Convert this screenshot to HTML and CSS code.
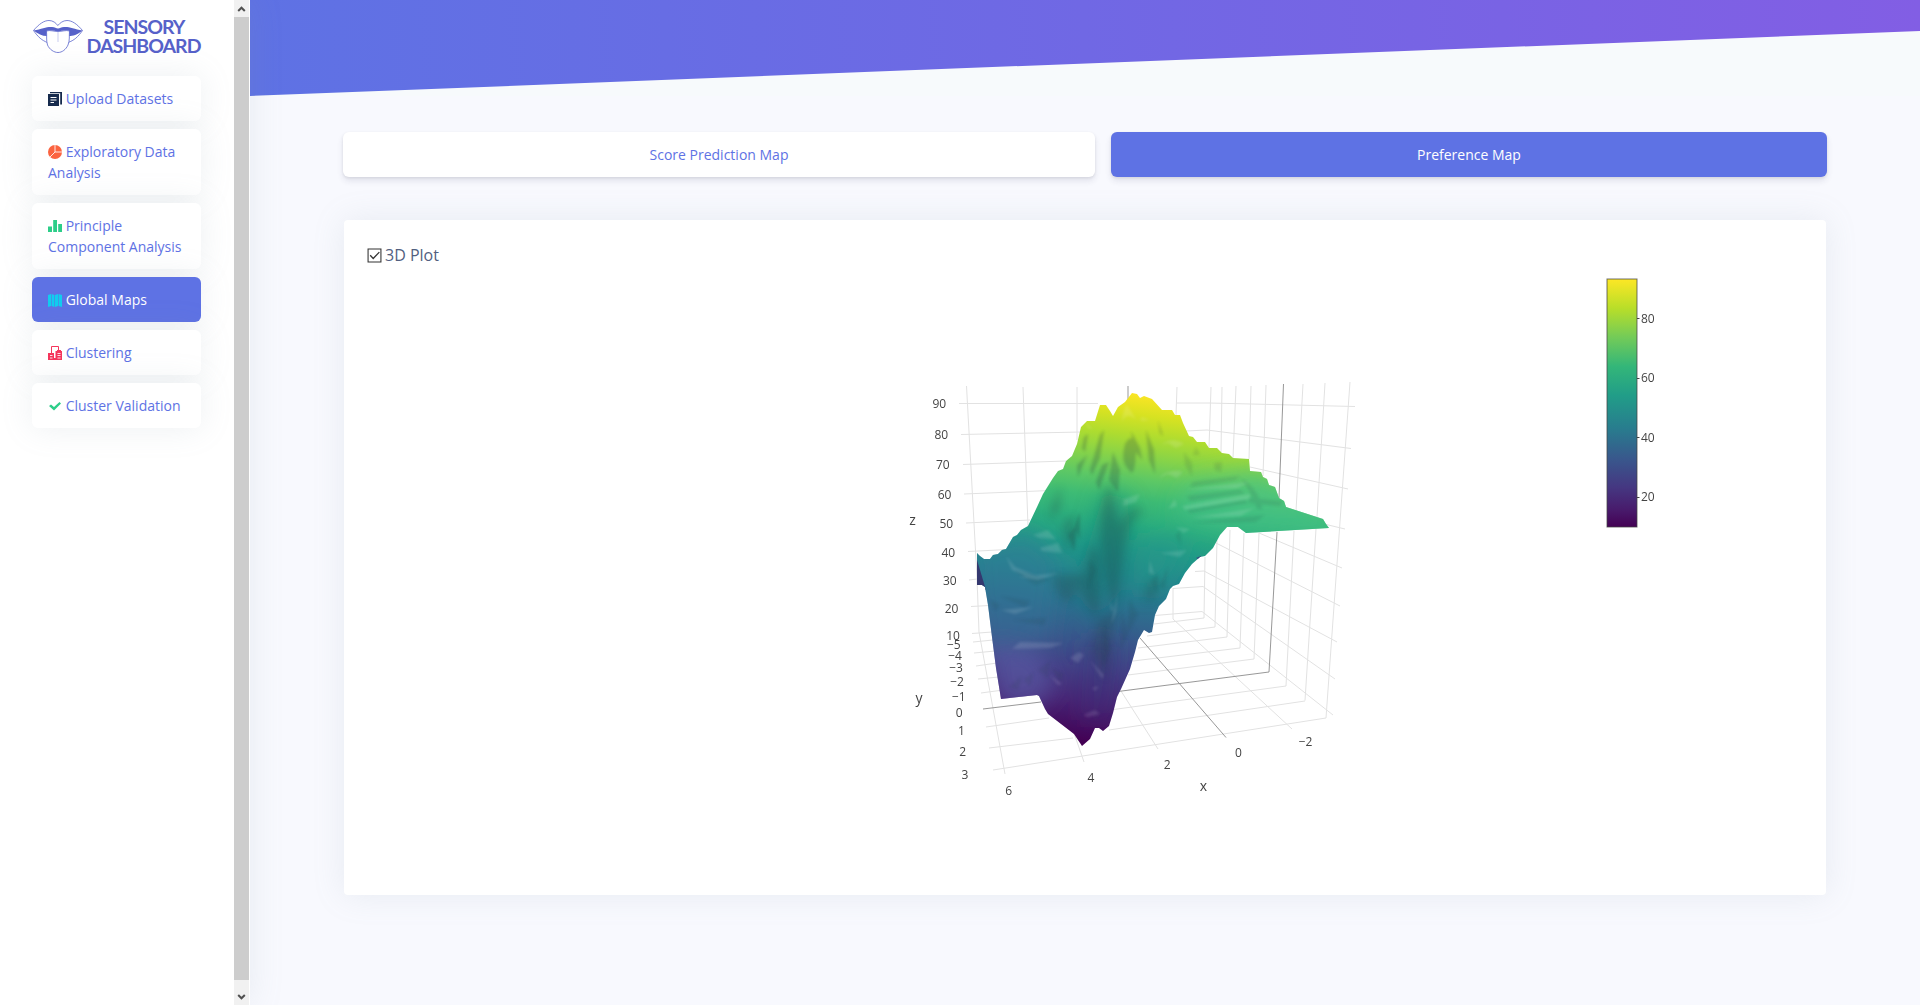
FILE: index.html
```html
<!DOCTYPE html>
<html lang="en">
<head>
<meta charset="utf-8">
<title>Sensory Dashboard</title>
<link rel="stylesheet" href="styles.css">
</head>
<body>
<div class="app">
  <aside class="sidebar">
    <div class="side-content">
      <svg class="logo" viewBox="32 16 176 41" role="img" aria-label="Sensory Dashboard">
        <g fill="none" stroke="#5a66cc" stroke-width=".8">
          <path d="M33.500 30.500C39 24 44 20.500 49 20.500C53 20.500 56 23 57.800 25.500C60 23 63 20.500 67 20.500C72 20.500 77 24 82.500 30.500"/>
          <path d="M33.500 30.500C38 37 42 40.500 47.500 42.500M82.500 30.500C78 37 74 40.500 68 42.500"/>
        </g>
        <path fill="#5661c9" d="M33.500 30.500C42 29 47 26.500 52 27C55 27.300 56 28.500 58 28.500S61 27.300 64 27C69 26.500 74 29 82.500 30.500C77 35 73 36 69 36V31C66 30 62 30.500 58 31.500C54 30.500 50 30 47 31V36C42 36 38 34 33.500 30.500Z"/>
        <path fill="#fff" stroke="#5a66cc" stroke-width=".8" d="M46.500 31C50 29.800 54 31.500 58 31.500S66 29.800 69.500 31C69 36 70 40 68 45C66 49.500 62 52.500 58 52.500S49.500 49.500 47.500 45C46 40 47 36 46.500 31Z"/>
        <path stroke="#c9cdf0" stroke-width="1" d="M58 32V42"/>
        <text x="103.500" y="34" textLength="82" lengthAdjust="spacing">SENSORY</text>
        <text x="86.500" y="52.500" textLength="115" lengthAdjust="spacing">DASHBOARD</text>
      </svg>
      <nav class="menu">
        <a class="item"><svg class="ico" viewBox="0 0 14 14"><path fill="#172b4d" d="M0 2h11v12H0zM2 0h12v12.500h-1.800V1.200H2z"/><path stroke="#fff" d="M2.500 5.500h6M2.500 8h6M2.500 10.500h3.500"/></svg> Upload Datasets</a>
        <a class="item"><svg class="ico" viewBox="0 0 14 14"><circle cx="7" cy="7" r="7" fill="#fb6340"/><path d="M7 0V7H14M7 7L2 12" fill="none" stroke="#fff" stroke-opacity=".85"/></svg> Exploratory Data Analysis</a>
        <a class="item"><svg class="ico" viewBox="0 0 14 14"><path fill="#2dce89" d="M0 7.500h4V13H0zM5.200 1h3.800v12H5.200zM10.200 5H14v8h-3.800z"/></svg> Principle Component Analysis</a>
        <a class="item active"><svg class="ico" viewBox="0 0 14 14"><path fill="#11cdef" d="M0 2l3-1v12l-3 1zM3.600 1l2.800 1v12l-2.800-1zM7 2l3-1v12l-3 1zM10.600 1L14 2v12l-3.400-1z"/></svg> Global Maps</a>
        <a class="item"><svg class="ico" viewBox="0 0 14 14"><path fill="#f5365c" d="M0 7h6v7H0zM7.500 5H9V4h4v1h1v9H7.500zM6 12h2v2H6z"/><path fill="none" stroke="#f5365c" d="M3.500 7V.5h7V5"/><path stroke="#fff" stroke-opacity=".85" d="M2 9.500h2.500M2 12h2.500M9.500 7.500h3M9.500 9.500h3M9.500 12h3"/></svg> Clustering</a>
        <a class="item"><svg class="ico" viewBox="0 0 14 14"><path fill="#2dce89" d="M1 7l2-1.600 3 2.500L11.500 3 13 4.400 6 11.500z"/></svg> Cluster Validation</a>
      </nav>
    </div>
    <div class="scrollbar">
      <span class="arrow"><svg viewBox="0 0 15 17"><path d="M4.200 11l3.300-3.300 3.300 3.300"/></svg></span>
      <span class="thumb"></span>
      <span class="arrow"><svg viewBox="0 0 15 17"><path d="M4.200 7l3.300 3.300L10.800 7"/></svg></span>
    </div>
  </aside>
  <main class="main">
    <div class="hero"><div class="slope"></div></div>
    <div class="tabs">
      <a class="tab">Score Prediction Map</a>
      <a class="tab selected">Preference Map</a>
    </div>
    <section class="card">
      <h2 class="title"><svg class="check" viewBox="0 0 14 14"><path d="M1 1h12v12H1z" stroke-width="1"/><path d="M3 6.800l2.800 3L11.500 3.800" stroke-width="1.200"/></svg>3D Plot</h2>
      <svg class="plot" viewBox="344 270 1482 600">
        <defs>
          <linearGradient id="surface" gradientUnits="userSpaceOnUse" x1="1130" y1="393" x2="1088" y2="743">
            <stop offset="0" stop-color="#fbe524"/><stop offset=".06" stop-color="#d6e222"/><stop offset=".12" stop-color="#addc30"/>
            <stop offset=".18" stop-color="#86d349"/><stop offset=".24" stop-color="#5dc865"/><stop offset=".3" stop-color="#3dbb75"/>
            <stop offset=".37" stop-color="#2bad7e"/><stop offset=".44" stop-color="#229b87"/><stop offset=".52" stop-color="#23878d"/>
            <stop offset=".61" stop-color="#2c708e"/><stop offset=".7" stop-color="#38598c"/><stop offset=".79" stop-color="#424086"/>
            <stop offset=".88" stop-color="#472575"/><stop offset="1" stop-color="#440154"/>
          </linearGradient>
          <linearGradient id="scale" x1="0" y1="0" x2="0" y2="1">
            <stop offset="0" stop-color="#fde725"/><stop offset=".118" stop-color="#b8de29"/><stop offset=".235" stop-color="#73cb58"/>
            <stop offset=".353" stop-color="#33b679"/><stop offset=".47" stop-color="#219d88"/><stop offset=".6" stop-color="#287d8e"/>
            <stop offset=".73" stop-color="#39568c"/><stop offset=".84" stop-color="#453781"/><stop offset=".93" stop-color="#481b6c"/><stop offset="1" stop-color="#440154"/>
          </linearGradient>
          <filter id="soft1" x="-50%" y="-50%" width="200%" height="200%"><feGaussianBlur stdDeviation="1.600"/></filter>
          <filter id="soft3" x="-50%" y="-50%" width="200%" height="200%"><feGaussianBlur stdDeviation="4"/></filter>
          <filter id="soft9" x="-50%" y="-50%" width="200%" height="200%"><feGaussianBlur stdDeviation="11"/></filter>
          <clipPath id="outline"><path id="shape" d="M977 553L980 556 984 559 990 559 993 555 998 554 1002 550 1006 549 1013 537 1017 535 1021 530 1028 526 1037 507 1043 494 1053 478 1058 471 1063 469 1066 461 1072 456 1077 444 1081 427 1087 421 1095 421 1100 405 1106 405 1110 411 1113 416 1118 407 1125 402 1132 393 1137 394 1140 398 1144 396 1152 399 1162 410 1172 410 1175 415 1180 415 1183 423 1189 436 1193 437 1197 442 1205 442 1209 448 1217 448 1222 453 1229 454 1233 458 1249 459 1250 471 1261 472 1263 477 1267 479 1269 485 1275 487 1279 498 1284 501 1286 507 1323 519 1326 524 1329 528 1246 533 1238 527 1227 527 1220 535 1213 548 1205 556 1200 557 1192 564 1185 573 1179 584 1173 586 1170 589 1166 599 1159 606 1155 615 1152 632 1149 633 1144 630 1138 640 1135 652 1130 669 1121 689 1117 697 1113 713 1109 726 1103 731 1099 728 1095 728 1090 739 1082 746 1080 743 1074 734 1048 714 1045 709 1039 696 1037 695 1001 699 996 668 992 637 988 605 985 587 982 585 977 585Z"/></clipPath>
        </defs>

        <g class="grid">
          <path d="M959 403.500L1098 403.500M1177 403L1209 403 1355 406.500M961 434.500L1081 432M1186 431L1207 430 1351 448.500M963 464.500L1066 461M1250 467L1348 489M964 494L1050 490.500M1320 523L1345 529M966 523L1030 520M1259 533L1342 568M968 551.500L1008 549.500M1216 543L1340 606M969 580L977 579M1195 571.500L1204 571 1337 642M971 606.500L989 605.500M1173 588.500L1203 586.500 1335 679M972 633.500L992 632M1155 615.500L1202 611.500 1333 715"/>
          <path d="M966.500 386L977 578 979 632 1005 774M1023 387L1028 526M1077 387V440M1177 387L1176 415M1211 387L1209 448M1222 387L1221 452M1236 386L1233 458M1251 386L1249 459M1266 385L1263 476M1303 384L1296 511M1294 531L1286 686M1325 383L1317 517M1316 529L1305 700.500M1350 382L1326 718M1217 540L1215 627M1230 530L1227 637M1244 533L1240 648M1259 533L1254 659M1205 557L1204 618M1173 588V619"/>
          <path d="M1204 618L1154 624M1215 627L1147 636M1227 637L1138 648M1240 648L1133 661M1254 659L1128 675M1286 686L1110 710M1049 718L986 727M1305 701L1109 730M1073 738L989 748M1326 718L993 770M981 693L1003 690M978 679L999 677M976 666L997 663M974 653L995 651M973 642L993 640"/>
          <path d="M1074 733L1084 762M1121 691L1158 749M1173 619L1292 729"/>
          <path class="wide" d="M1128 386V400"/>
          <path class="zero" d="M1283.500 384L1279 498M1277 532L1269 672 1118 691.500M1041 702L983 709M1140 638L1226 737.500"/>
        </g>

        <use href="#shape" fill="url(#surface)"/>
        <g clip-path="url(#outline)">
          <g filter="url(#soft9)">
            <path fill="#43c18b" opacity=".6" d="M1190 485L1260 470 1340 520 1340 540 1220 530 1175 515Z"/>
            <path fill="#33789a" opacity=".45" d="M970 545L1030 530 1060 560 1050 640 980 650Z"/>
            <path fill="#5a5ca6" opacity=".65" d="M985 645L1040 650 1055 685 1040 705 1000 710Z"/>
            <path fill="#1c7d7c" opacity=".5" d="M1105 490L1128 500 1130 580 1095 620 1075 590Z"/>
            <path fill="#23958a" opacity=".6" d="M1140 540L1190 540 1160 590 1135 590Z"/>
            <path fill="#3a3079" opacity=".35" d="M1085 640L1120 640 1110 720 1080 720Z"/>
          </g>
          <g class="shade" filter="url(#soft3)">
            <path d="M1104 498Q1111 470 1114 505L1120 525Q1132 500 1144 512Q1130 515 1124 550L1115 610 1107 585Q1096 530 1104 498ZM1051 507L1061 485 1060 510 1050 520ZM1064 520L1075 515 1070 550Q1062 545 1064 520ZM1092 545Q1104 550 1097 620L1080 590ZM1149 582Q1157 570 1158 590L1150 603Q1142 598 1149 582ZM1053 575L1085 575 1070 602Q1055 600 1053 575ZM1098 620L1116 610 1106 680 1092 650Z"/>
          </g>
          <g class="shade" filter="url(#soft1)">
            <path d="M1125 444Q1133 430 1136 450Q1135 480 1129 470Q1120 462 1125 444ZM1084 437L1088 434 1085 452 1082 448ZM1100 435L1104 430 1100 458 1092 475 1090 470ZM1113 452L1120 470 1118 492 1109 480ZM1131 431L1140 448 1142 460 1134 450ZM1146 430L1154 450 1155 474 1149 460ZM1158 420L1163 436 1160 433ZM1077 465L1087 455 1078 477ZM1102 465L1109 462 1099 490 1096 482ZM1068 535L1078 522 1074 551ZM1075 525L1080 512 1080 540Z"/>
            <path opacity=".5" d="M1184 452L1192 463 1192 476 1185 465ZM1180 530L1181 545 1176 536ZM1152 580L1158 574 1157 592ZM1160 585L1168 566 1165 590ZM1196 447L1200 455 1193 455ZM1214 463L1222 462 1221 472 1215 470ZM1009 687L1022 676 1018 690ZM1024 680L1034 672 1030 686ZM1038 670L1050 661 1048 678ZM1051 668L1064 674 1060 682ZM1000 596L1030 601 1025 607ZM1012 620L1046 618 1044 625ZM1014 570L1050 580 1035 585ZM990 600L1000 605 995 611ZM1193 482L1240 476 1235 480 1190 487ZM1187 496L1240 490 1245 493 1190 501ZM1187 510L1245 500 1248 503 1190 513ZM1190 523L1265 515 1255 522ZM1241 478Q1260 490 1262 510L1257 508Q1250 490 1241 478ZM1248 498L1282 501 1280 506 1250 503ZM1090 560L1096 570 1088 590ZM1104 625L1110 650 1103 665ZM1122 610L1128 635 1120 650ZM1130 600L1138 615 1127 635Z"/>
          </g>
          <g class="light" filter="url(#soft1)">
            <path d="M1122 423Q1123 408 1127 405Q1133 414 1136 420Q1126 410 1122 423ZM1161 445Q1172 436 1184 444L1176 448 1168 443ZM1158 478Q1170 468 1183 472L1177 478 1168 474ZM1124 499L1140 494 1136 502 1123 506ZM1168 509L1175 499 1177 506ZM1141 417L1150 420 1141 421ZM1085 421L1093 430 1088 428ZM1160 553L1187 550 1180 557ZM1150 560L1154 575 1149 572ZM1175 527L1190 529 1184 533ZM1184 490L1250 482 1237 488ZM1182 506L1250 494 1250 499 1185 510ZM1190 518L1255 508 1240 516ZM1033 535L1048 530 1056 539 1040 538ZM1040 548L1058 543 1062 553 1042 551ZM1006 556L1015 567 1036 576 1030 578 1012 570ZM1001 610L1034 607 1015 614ZM1020 642L1064 643 1050 648 1012 649ZM1018 577L1060 573 1038 580ZM1070 658L1079 652 1084 655 1078 663ZM1092 688L1099 686 1095 691ZM1083 715L1095 710 1100 714 1088 717ZM1090 660L1104 675 1102 679ZM1110 600L1113 609 1111 612ZM1050 675L1062 684 1058 685ZM1118 590L1111 625 1116 613Z"/>
          </g>
          <path fill="#34386f" d="M977 560L986 590 977 586Z"/>
          <path fill="#394580" d="M1196 558l5-2v3h-3z"/>
        </g>

        <g class="ticks">
          <text x="939.300" y="408">90</text><text x="941.300" y="439">80</text><text x="942.800" y="469">70</text><text x="944.500" y="499">60</text><text x="946.300" y="528">50</text><text x="948.300" y="557">40</text><text x="949.800" y="585">30</text><text x="951.500" y="612.500">20</text><text x="953" y="639.500">10</text>
          <text x="953.800" y="649">−5</text><text x="955" y="660">−4</text><text x="956" y="672">−3</text><text x="957" y="685.500">−2</text><text x="958.800" y="700.500">−1</text><text x="959.300" y="716.500">0</text><text x="961.500" y="735">1</text><text x="962.800" y="755.500">2</text><text x="965" y="779">3</text>
          <text x="1008.800" y="795">6</text><text x="1091" y="781.500">4</text><text x="1167.300" y="768.500">2</text><text x="1238.500" y="757">0</text><text x="1305.500" y="746">−2</text>
          <g class="axis"><text x="912.500" y="524.500">z</text><text x="919" y="703">y</text><text x="1203.300" y="791">x</text></g>
        </g>
        <rect x="1607" y="279" width="30" height="248" fill="url(#scale)" stroke="#444" stroke-opacity=".75"/>
        <path stroke="#444" d="M1637 318.500h2.500M1637 378.500h2.500M1637 437.500h2.500M1637 497.500h2.500"/>
        <g class="scale-ticks"><text x="1641" y="323">80</text><text x="1641" y="382">60</text><text x="1641" y="442">40</text><text x="1641" y="501">20</text></g>
      </svg>
    </section>
  </main>
</div>
</body>
</html>
```
FILE: styles.css
```css
* { box-sizing: border-box; }
body {
  margin: 0;
  height: 1005px;
  overflow: hidden;
  background: #f8f9fe;
  color: #525f7f;
  font: 14px/21px "Open Sans", sans-serif;
}
.app { display: flex; height: 100%; }

.sidebar {
  display: flex;
  flex: none;
  width: 250px;
  background: #fff;
  box-shadow: 0 0 32px rgba(136, 152, 170, .15);
  z-index: 1;
}
.side-content { width: 234px; padding: 16px 33px 0 32px; overflow: hidden; }
.logo { display: block; width: 176px; height: 41px; margin-bottom: 19px; }
.logo text { font: 700 19.500px Lato, sans-serif; fill: #5661c9; }
.menu { display: flex; flex-direction: column; gap: 8px; }
.item {
  padding: 12px 16px;
  border-radius: 6px;
  background: #fff;
  color: #5e72e4;
  box-shadow: 0 0 32px rgba(136, 152, 170, .15);
}
.item.active { background: #5e72e4; color: #fff; }
.ico { width: 14px; height: 14px; vertical-align: -2px; }

.scrollbar { display: flex; flex-direction: column; width: 15px; background: #f1f1f1; }
.arrow { height: 17px; }
.arrow svg { display: block; width: 15px; height: 17px; fill: none; stroke: #505050; stroke-width: 2; }
.thumb { height: 963px; margin-bottom: 8px; background: #cdcdcd; }

.main { flex: 1; min-width: 0; }
.hero { height: 96px; background: #f7fafc; }
.slope {
  height: 100%;
  background: linear-gradient(87deg, #5e72e4 0, #825ee4 100%);
  clip-path: polygon(0 0, 100% 0, 100% 31px, 0 100%);
}
.tabs { display: flex; gap: 16px; margin: 36px 93px 0; }
.tab {
  width: 752px;
  padding: 12px 16px;
  border-radius: 6px;
  background: #fff;
  color: #5e72e4;
  text-align: center;
  box-shadow: 0 4px 6px rgba(50, 50, 93, .11), 0 1px 3px rgba(0, 0, 0, .08);
}
.tab.selected { width: 716px; background: #5e72e4; color: #fff; }
.card {
  width: 1482px;
  height: 675px;
  margin: 43px 0 0 94px;
  border-radius: 4px;
  background: #fff;
  box-shadow: 0 0 32px rgba(136, 152, 170, .15);
}
.title {
  display: flex;
  align-items: center;
  gap: 3px;
  height: 50px;
  margin: 0;
  padding: 21px 0 0 23px;
  font-size: 16px;
  font-weight: 400;
}
.check { width: 15px; height: 15px; fill: none; stroke: #333; }

.plot { display: block; width: 1482px; height: 600px; font-family: "Open Sans", sans-serif; }
.grid { fill: none; stroke: #e2e2e2; stroke-width: 1; }
.grid .zero { stroke: #8c8c8c; stroke-width: .9; }
.grid .wide { stroke: #ccc; stroke-width: 2; }
.shade { fill: #203c40; opacity: .24; }
.light { fill: #fff; opacity: .13; }
.ticks { font-size: 12px; fill: #444; text-anchor: middle; }
.axis { font-size: 14px; }
.scale-ticks { font-size: 12px; fill: #444; }
```
